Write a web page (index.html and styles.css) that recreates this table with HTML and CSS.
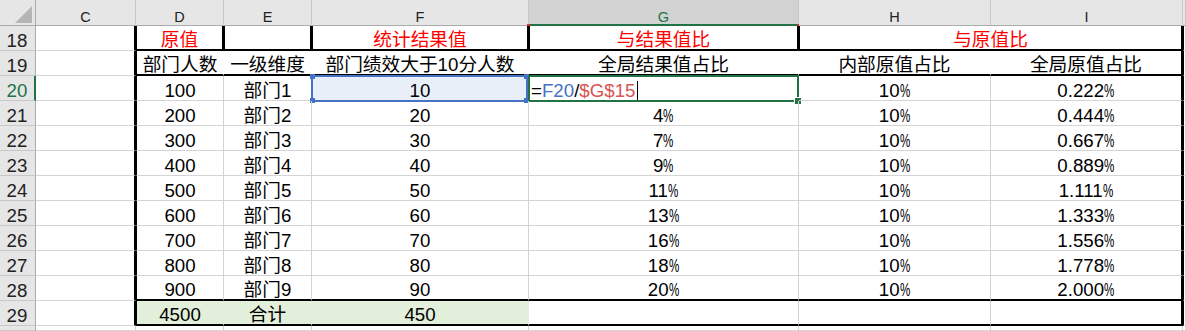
FILE: index.html
```html
<!DOCTYPE html>
<html lang="zh-CN">
<head>
<meta charset="utf-8">
<title>Sheet</title>
<link rel="stylesheet" href="styles.css">
</head>
<body>
<div class="sheet">
  <!-- column headers -->
  <div class="cell corner"><svg class="tri" width="17" height="17" viewBox="0 0 17 17"><polygon points="0,17 17,17 17,0" fill="#b5b5b5"/></svg></div>
  <div class="cell ch">C</div>
  <div class="cell ch">D</div>
  <div class="cell ch">E</div>
  <div class="cell ch">F</div>
  <div class="cell ch chs">G<span class="mark ml"></span><span class="mark mr"></span></div>
  <div class="cell ch">H</div>
  <div class="cell ch">I</div>
  <div class="cell ch"></div>

  <!-- row 18 -->
  <div class="cell rh">18</div>
  <div class="cell r2"></div>
  <div class="cell l1 r2 b2 red">原值</div>
  <div class="cell l1 r2 b2"></div>
  <div class="cell l1 r2 b2 red">统计结果值</div>
  <div class="cell l1 r2 b2 red">与结果值比</div>
  <div class="cell l1 r2 b2 red span2">与原值比</div>
  <div class="cell l1"></div>

  <!-- row 19 -->
  <div class="cell rh">19</div>
  <div class="cell r2"></div>
  <div class="cell l1 b2 nr">部门人数</div>
  <div class="cell b2 nr">一级维度</div>
  <div class="cell b2 nr">部门绩效大于10分人数</div>
  <div class="cell b2 nr">全局结果值占比</div>
  <div class="cell b2 nr">内部原值占比</div>
  <div class="cell b2 r2">全局原值占比</div>
  <div class="cell l1"></div>

  <!-- row 20 -->
  <div class="cell rh act">20</div>
  <div class="cell r2"></div>
  <div class="cell l1">100</div>
  <div class="cell">部门1</div>
  <div class="cell refcell">10<span class="refbox"><i class="hd tl"></i><i class="hd tr"></i><i class="hd bl"></i><i class="hd br"></i></span></div>
  <div class="cell left"><span class="fx">=<span class="rf1">F20</span>/<span class="rf2">$G$15</span><span class="caret"></span></span><span class="actbox"><i class="fh"></i></span></div>
  <div class="cell">10<span class="pc">%</span></div>
  <div class="cell r2">0.222<span class="pc">%</span></div>
  <div class="cell l1"></div>

  <!-- row 21 -->
  <div class="cell rh">21</div>
  <div class="cell r2"></div>
  <div class="cell l1">200</div>
  <div class="cell">部门2</div>
  <div class="cell">20</div>
  <div class="cell">4<span class="pc">%</span></div>
  <div class="cell">10<span class="pc">%</span></div>
  <div class="cell r2">0.444<span class="pc">%</span></div>
  <div class="cell l1"></div>

  <!-- row 22 -->
  <div class="cell rh">22</div>
  <div class="cell r2"></div>
  <div class="cell l1">300</div>
  <div class="cell">部门3</div>
  <div class="cell">30</div>
  <div class="cell">7<span class="pc">%</span></div>
  <div class="cell">10<span class="pc">%</span></div>
  <div class="cell r2">0.667<span class="pc">%</span></div>
  <div class="cell l1"></div>

  <!-- row 23 -->
  <div class="cell rh">23</div>
  <div class="cell r2"></div>
  <div class="cell l1">400</div>
  <div class="cell">部门4</div>
  <div class="cell">40</div>
  <div class="cell">9<span class="pc">%</span></div>
  <div class="cell">10<span class="pc">%</span></div>
  <div class="cell r2">0.889<span class="pc">%</span></div>
  <div class="cell l1"></div>

  <!-- row 24 -->
  <div class="cell rh">24</div>
  <div class="cell r2"></div>
  <div class="cell l1">500</div>
  <div class="cell">部门5</div>
  <div class="cell">50</div>
  <div class="cell">11<span class="pc">%</span></div>
  <div class="cell">10<span class="pc">%</span></div>
  <div class="cell r2">1.111<span class="pc">%</span></div>
  <div class="cell l1"></div>

  <!-- row 25 -->
  <div class="cell rh">25</div>
  <div class="cell r2"></div>
  <div class="cell l1">600</div>
  <div class="cell">部门6</div>
  <div class="cell">60</div>
  <div class="cell">13<span class="pc">%</span></div>
  <div class="cell">10<span class="pc">%</span></div>
  <div class="cell r2">1.333<span class="pc">%</span></div>
  <div class="cell l1"></div>

  <!-- row 26 -->
  <div class="cell rh">26</div>
  <div class="cell r2"></div>
  <div class="cell l1">700</div>
  <div class="cell">部门7</div>
  <div class="cell">70</div>
  <div class="cell">16<span class="pc">%</span></div>
  <div class="cell">10<span class="pc">%</span></div>
  <div class="cell r2">1.556<span class="pc">%</span></div>
  <div class="cell l1"></div>

  <!-- row 27 -->
  <div class="cell rh">27</div>
  <div class="cell r2"></div>
  <div class="cell l1">800</div>
  <div class="cell">部门8</div>
  <div class="cell">80</div>
  <div class="cell">18<span class="pc">%</span></div>
  <div class="cell">10<span class="pc">%</span></div>
  <div class="cell r2">1.778<span class="pc">%</span></div>
  <div class="cell l1"></div>

  <!-- row 28 -->
  <div class="cell rh">28</div>
  <div class="cell r2"></div>
  <div class="cell l1 b2">900</div>
  <div class="cell b2">部门9</div>
  <div class="cell b2">90</div>
  <div class="cell b2">20<span class="pc">%</span></div>
  <div class="cell b2">10<span class="pc">%</span></div>
  <div class="cell b2 r2">2.000<span class="pc">%</span></div>
  <div class="cell l1"></div>

  <!-- row 29 -->
  <div class="cell rh">29</div>
  <div class="cell r2"></div>
  <div class="cell l1 b2 grn">4500</div>
  <div class="cell b2 grn">合计</div>
  <div class="cell b2 grn">450</div>
  <div class="cell b2"></div>
  <div class="cell b2"></div>
  <div class="cell b2 r2"></div>
  <div class="cell l1"></div>

  <!-- row 30 (partial) -->
  <div class="cell rh clip"></div>
  <div class="cell"></div>
  <div class="cell"></div>
  <div class="cell"></div>
  <div class="cell"></div>
  <div class="cell"></div>
  <div class="cell"></div>
  <div class="cell"></div>
  <div class="cell"></div>
</div>
</body>
</html>
```

FILE: styles.css
```css
* { box-sizing: border-box; margin: 0; padding: 0; }

html, body {
  width: 1186px;
  height: 331px;
  overflow: hidden;
  background: #ffffff;
}

body {
  font-family: "Liberation Sans", "Noto Sans CJK SC", sans-serif;
  color: #000;
}

.sheet {
  display: grid;
  grid-template-columns: 36px 100px 88px 88px 217px 270px 192px 192px 3px;
  grid-template-rows: 26px repeat(12, 25px) 5px;
  width: 1186px;
  height: 331px;
  overflow: hidden;
}

.cell {
  position: relative;
  display: flex;
  align-items: flex-end;
  justify-content: center;
  border-right: 1px solid #d4d4d4;
  border-bottom: 1px solid #d4d4d4;
  font-size: 18.7px;
  line-height: 18px;
  white-space: nowrap;
  min-width: 0;
}

.left { justify-content: flex-start; padding-left: 2px; }

/* headers */
.corner {
  background: #e6e6e6;
  border-right: 1px solid #ababab;
  border-bottom: 1px solid #ababab;
  justify-content: flex-end;
  align-items: flex-end;
  padding: 0 3px 2px 0;
}

.ch {
  background: #e6e6e6;
  border-right: 1px solid #c8c8c8;
  border-bottom: 1px solid #ababab;
  font-size: 14.5px;
  line-height: 14px;
  color: #222;
  padding-bottom: 1px;
}

.chs {
  background: #d2d2d2;
  color: #217346;
  border-bottom: 2px solid #217346;
  padding-bottom: 0;
}

.mark {
  position: absolute;
  bottom: -2px;
  width: 3px;
  height: 2px;
  background: #d9342b;
}
.ml { left: -2px; }
.mr { right: -2px; }

.rh {
  background: #e6e6e6;
  border-right: 1px solid #ababab;
  border-bottom: 1px solid #c8c8c8;
  color: #222;
  padding-right: 1px;
}

.rh.act {
  border-right: 2px solid #217346;
  color: #217346;
  padding-right: 0;
}

.clip { overflow: hidden; }

/* borders */
.r2 { border-right: 2px solid #000; }
.l1 { border-left: 1px solid #000; }
.b2 { border-bottom: 2px solid #000; }
.nr { border-right-color: transparent; }

.span2 { grid-column: span 2; }

.red { color: #ff0000; }

.grn {
  background: #e2efda;
  border-right-color: #e2efda;
}

.pc {
  display: inline-block;
  transform: scaleX(0.62);
  transform-origin: left bottom;
  margin-right: -6px;
}

/* F20 reference highlight */
.refcell { background: #e8eff9; }

.refbox {
  position: absolute;
  left: -1px;
  top: -1px;
  right: 0;
  bottom: -2px;
  border: 2px solid #4472c4;
}

.hd {
  position: absolute;
  width: 5px;
  height: 5px;
  background: #4472c4;
}
.hd.tl { left: -3px; top: -3px; }
.hd.tr { right: -3px; top: -3px; }
.hd.bl { left: -3px; bottom: -3px; }
.hd.br { right: -3px; bottom: -3px; }

/* G20 active cell being edited */
.fx { color: #000; }
.rf1 { color: #4472c4; }
.rf2 { color: #d9534f; }

.caret {
  display: inline-block;
  width: 1px;
  height: 19px;
  background: #000;
  margin-left: 2px;
  vertical-align: -3px;
}

.actbox {
  position: absolute;
  left: -1px;
  top: -1px;
  right: -1px;
  bottom: -2px;
  border: 2px solid #217346;
}

.fh {
  position: absolute;
  right: -4px;
  bottom: -4px;
  width: 6px;
  height: 6px;
  background: #217346;
  outline: 1px solid #fff;
}
```
